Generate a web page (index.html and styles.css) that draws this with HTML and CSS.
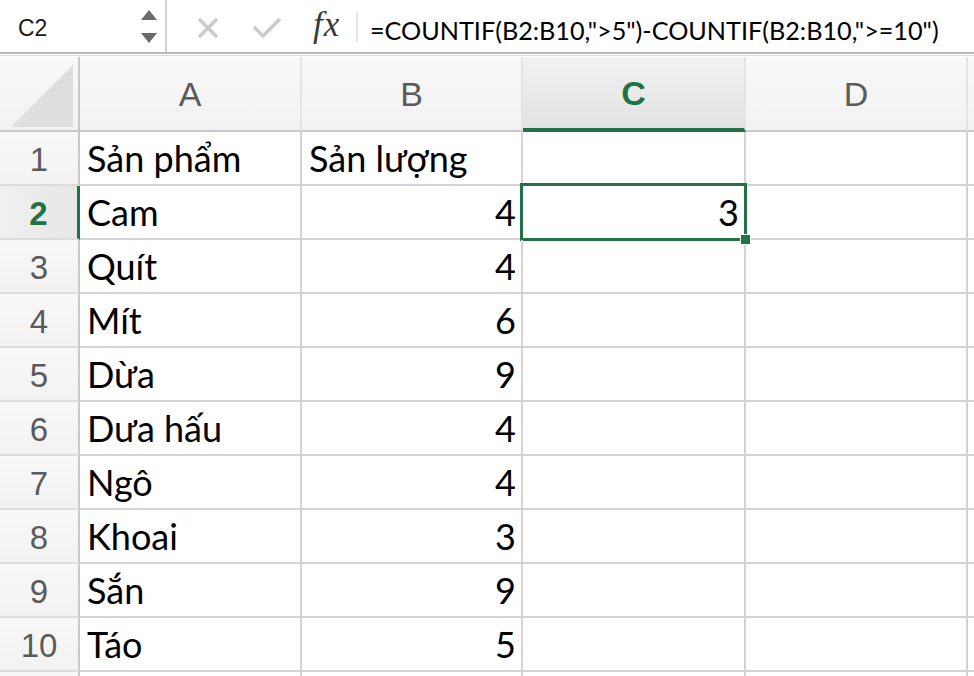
FILE: index.html
```html
<!DOCTYPE html>
<html lang="vi">
<head>
    <meta charset="UTF-8">
    <meta name="viewport" content="width=device-width, initial-scale=1.0">
    <title>Bảng tính - COUNTIF</title>
    <link rel="stylesheet" href="styles.css">
</head>
<body>

<div class="formula-bar">
    <div class="name-box">
        <span class="name-text">C2</span>
        <svg class="stepper" width="18" height="36" viewBox="0 0 18 36">
            <polygon points="9,1 17,11 1,11" fill="#6b6b6b"/>
            <polygon points="1,24 17,24 9,34" fill="#6b6b6b"/>
        </svg>
    </div>
    <div class="fx-buttons">
        <svg class="icon-cancel" width="22" height="22" viewBox="0 0 22 22">
            <path d="M2 2 L20 20 M20 2 L2 20" stroke="#cbcbcb" stroke-width="3.4" fill="none"/>
        </svg>
        <svg class="icon-enter" width="30" height="22" viewBox="0 0 30 22">
            <path d="M2 10 L11 19 L28 2" stroke="#cbcbcb" stroke-width="3.6" fill="none"/>
        </svg>
        <span class="fx">fx</span>
    </div>
    <div class="formula">=COUNTIF(B2:B10,"&gt;5")-COUNTIF(B2:B10,"&gt;=10")</div>
</div>

<div class="sheet">
    <div class="hd corner">
        <svg width="62" height="62" viewBox="0 0 62 62">
            <polygon points="62,0 62,62 0,62" fill="#dedede"/>
        </svg>
    </div>
    <div class="hd col">A</div>
    <div class="hd col">B</div>
    <div class="hd col selected">C</div>
    <div class="hd col">D</div>
    <div class="hd col"></div>

    <div class="hd row">1</div>
    <div class="cell">Sản phẩm</div>
    <div class="cell">Sản lượng</div>
    <div class="cell"></div>
    <div class="cell"></div>
    <div class="cell"></div>

    <div class="hd row selected">2</div>
    <div class="cell">Cam</div>
    <div class="cell num">4</div>
    <div class="cell num active">3<span class="fill-handle"></span></div>
    <div class="cell"></div>
    <div class="cell"></div>

    <div class="hd row">3</div>
    <div class="cell">Quít</div>
    <div class="cell num">4</div>
    <div class="cell"></div>
    <div class="cell"></div>
    <div class="cell"></div>

    <div class="hd row">4</div>
    <div class="cell">Mít</div>
    <div class="cell num">6</div>
    <div class="cell"></div>
    <div class="cell"></div>
    <div class="cell"></div>

    <div class="hd row">5</div>
    <div class="cell">Dừa</div>
    <div class="cell num">9</div>
    <div class="cell"></div>
    <div class="cell"></div>
    <div class="cell"></div>

    <div class="hd row">6</div>
    <div class="cell">Dưa hấu</div>
    <div class="cell num">4</div>
    <div class="cell"></div>
    <div class="cell"></div>
    <div class="cell"></div>

    <div class="hd row">7</div>
    <div class="cell">Ngô</div>
    <div class="cell num">4</div>
    <div class="cell"></div>
    <div class="cell"></div>
    <div class="cell"></div>

    <div class="hd row">8</div>
    <div class="cell">Khoai</div>
    <div class="cell num">3</div>
    <div class="cell"></div>
    <div class="cell"></div>
    <div class="cell"></div>

    <div class="hd row">9</div>
    <div class="cell">Sắn</div>
    <div class="cell num">9</div>
    <div class="cell"></div>
    <div class="cell"></div>
    <div class="cell"></div>

    <div class="hd row">10</div>
    <div class="cell">Táo</div>
    <div class="cell num">5</div>
    <div class="cell"></div>
    <div class="cell"></div>
    <div class="cell"></div>

    <div class="hd row"></div>
    <div class="cell"></div>
    <div class="cell"></div>
    <div class="cell"></div>
    <div class="cell"></div>
    <div class="cell"></div>
</div>

</body>
</html>
```

FILE: styles.css
```css
body, html {
    margin: 0;
    padding: 0;
    background-color: #ffffff;
    overflow: hidden;
}
.formula-bar {
    display: flex;
    align-items: stretch;
    height: 52px;
    border-bottom: 2px solid #b9b9b9;
    box-shadow: 0 1px 0 #ffffff, 0 2px 0 #dcdcdc;
    margin-bottom: 3px;
}
.name-box {
    width: 167px;
    border-right: 2px solid #d2d2d2;
    display: flex;
    align-items: center;
    justify-content: space-between;
    padding: 0 7px 0 18px;
    box-sizing: border-box;
}
.name-text {
    font-family: "Liberation Sans", Arial, sans-serif;
    font-size: 23px;
    color: #1a1a1a;
    padding-top: 4px;
}
.stepper {
    margin-top: 2px;
}
.fx-buttons {
    display: flex;
    align-items: center;
    padding-left: 30px;
    width: 191px;
    box-sizing: border-box;
    border-right: 2px solid #e4e4e4;
    margin: 12px 0 10px 0;
}
.icon-cancel {
    margin-right: 33px;
    margin-top: 2px;
}
.icon-enter {
    margin-right: 31px;
    margin-top: 2px;
}
.fx {
    font-family: "Liberation Serif", "Times New Roman", serif;
    font-style: italic;
    font-size: 35px;
    color: #3a3a3a;
    letter-spacing: 1px;
    margin-top: -4px;
}
.formula {
    font-family: Lato, "Noto Sans", sans-serif;
    font-size: 25.2px;
    color: #000000;
    padding-left: 12px;
    padding-top: 15px;
    white-space: nowrap;
}
.sheet {
    display: grid;
    grid-template-columns: 80px 222px 221px 223px 222px 20px;
    grid-template-rows: 75px repeat(11, 54px);
    height: 621px;
    overflow: hidden;
}
.hd {
    box-sizing: border-box;
    background: linear-gradient(#f8f8f8, #f2f2f2);
    font-family: "Liberation Sans", Arial, sans-serif;
    color: #5b5b5b;
    display: flex;
    align-items: center;
    justify-content: center;
}
.hd.col {
    font-size: 34px;
    border-bottom: 2px solid #c9c9c9;
    border-right: 2px solid #e4e4e4;
    padding-top: 2px;
}
.hd.corner {
    border-bottom: 2px solid #c9c9c9;
    border-right: 2px solid #c9c9c9;
    align-items: flex-end;
    justify-content: flex-end;
    padding: 0 5px 3px 0;
}
.hd.row {
    font-size: 33px;
    border-bottom: 2px solid #dcdcdc;
    border-right: 2px solid #c9c9c9;
    padding-top: 4px;
}
.hd.col.selected {
    background: linear-gradient(#f2f2f2, #e2e2e2);
    color: #217346;
    font-weight: bold;
    border-bottom: 4px solid #217346;
}
.hd.row.selected {
    background: linear-gradient(to right, #f0f0f0, #e6e6e6);
    color: #217346;
    font-weight: bold;
    border-right: 3px solid #217346;
}
.cell {
    box-sizing: border-box;
    border-right: 2px solid #d4d4d4;
    border-bottom: 2px solid #d4d4d4;
    font-family: Lato, "Noto Sans", sans-serif;
    font-size: 36px;
    color: #000000;
    display: flex;
    align-items: flex-end;
    padding: 0 5px 4px 7px;
    line-height: 44px;
    white-space: nowrap;
    position: relative;
}
.cell.num {
    justify-content: flex-end;
}
.cell.active::after {
    content: "";
    position: absolute;
    top: -3px;
    left: -3px;
    right: -3px;
    bottom: -3px;
    border: 3px solid #217346;
}
.fill-handle {
    position: absolute;
    right: -7px;
    bottom: -7px;
    width: 9px;
    height: 9px;
    background-color: #217346;
    border: 1px solid #ffffff;
    z-index: 2;
}
```
